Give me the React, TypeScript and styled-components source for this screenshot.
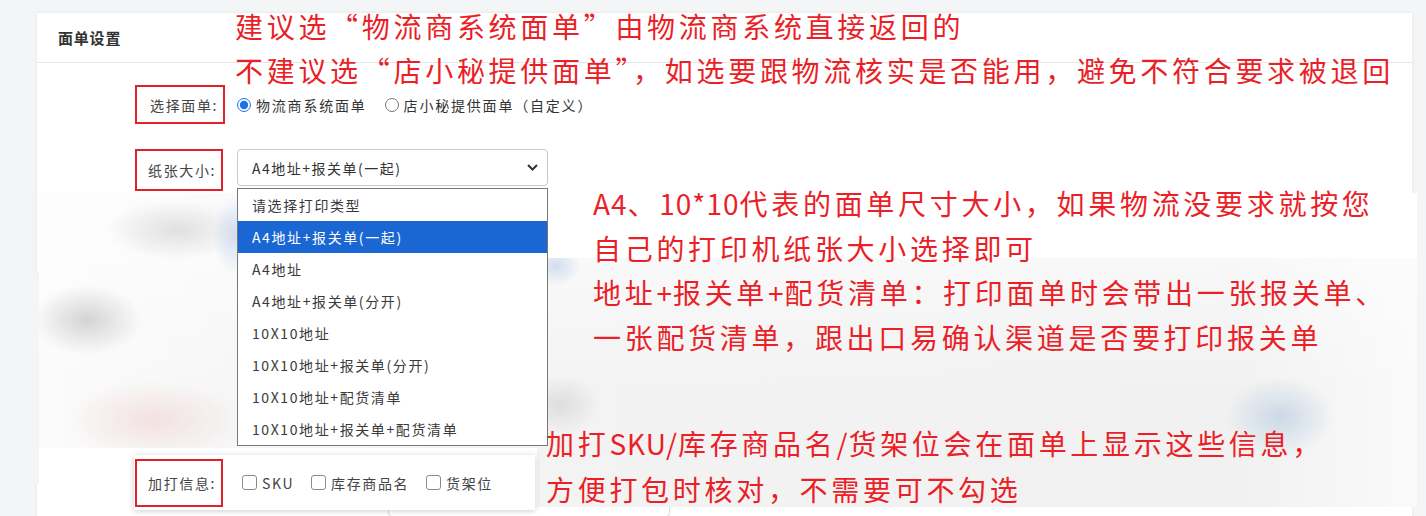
import React from "react";
import styled, {createGlobalStyle} from "styled-components";


const GlobalStyle = createGlobalStyle`
    html, body {
        margin: 0;
        padding: 0;
        background: #f4f5f6;
    }
    body {
        font-family: "Noto Sans CJK SC", "Noto Sans", sans-serif;
    }
`;

const Page = styled.div`
    position: relative;
    width: 1426px;
    height: 516px;
    overflow: hidden;
    padding-top: 13px;
    box-sizing: border-box;
`;

const Card = styled.section<{$height: number; $gap?: number}>`
    margin-left: 37px;
    margin-top: ${p => p.$gap || 0}px;
    width: 1375px;
    height: ${p => p.$height}px;
    background: #fff;
    box-shadow: 0 0 3px rgba(0, 0, 0, .08);
`;

const CardHeader = styled.header`
    height: 49px;
    padding-left: 21px;
    display: flex;
    align-items: center;
    border-bottom: 1px solid #e6e8ea;
    font-size: 15px;
    font-weight: 700;
    color: #333;
    letter-spacing: 0.8px;
`;

const Form = styled.div`
    padding: 22px 0 0 98px;
    display: flex;
    flex-direction: column;
    gap: 25px;
`;

const Row = styled.div<{$align?: string}>`
    display: grid;
    grid-template-columns: 90px auto;
    column-gap: 12px;
    align-items: ${p => p.$align || "center"};
`;

const Label = styled.label<{$h: number; $w?: number}>`
    box-sizing: border-box;
    width: ${p => p.$w || 90}px;
    height: ${p => p.$h}px;
    border: 2px solid #e3212b;
    display: flex;
    align-items: center;
    justify-content: flex-end;
    padding-right: 5px;
    font-size: 14px;
    color: #444;
    letter-spacing: 1.6px;
`;

const RadioGroup = styled.div`
    display: flex;
    align-items: center;
`;

const RadioOption = styled.label`
    display: flex;
    align-items: center;
    gap: 5px;
    margin-right: 18px;
    font-size: 14px;
    color: #333;
    letter-spacing: 1.8px;

    input {
        margin: 0;
        width: 14px;
        height: 14px;
        accent-color: #1a73e8;
    }
`;

const SelectWrap = styled.div`
    position: relative;
    width: 311px;
`;

const SelectBox = styled.div`
    box-sizing: border-box;
    height: 37px;
    border: 1px solid #c9c9c9;
    border-radius: 4px;
    display: flex;
    align-items: center;
    justify-content: space-between;
    padding: 0 9px 0 14px;
    font-size: 14px;
    color: #333;
    letter-spacing: 1.5px;
`;

const OptionList = styled.ul`
    position: absolute;
    top: 39px;
    left: 0;
    z-index: 3;
    box-sizing: border-box;
    width: 311px;
    margin: 0;
    padding: 0;
    list-style: none;
    border: 1px solid #777;
    background: #fff;
`;

const OptionItem = styled.li<{$active?: boolean}>`
    height: 32px;
    display: flex;
    align-items: center;
    padding-left: 14px;
    font-size: 14px;
    letter-spacing: 1.6px;
    color: ${p => p.$active ? "#fff" : "#3a3a3a"};
    background: ${p => p.$active ? "#1a67d3" : "transparent"};
`;

const GhostInput = styled.div`
    margin: 211px 0 0 351px;
    width: 280px;
    height: 32px;
    border: 1px solid #dadada;
    border-radius: 4px;
`;

// blurred part of the pasted screenshot
const BlurLayer = styled.div`
    position: absolute;
    left: 39px;
    top: 193px;
    z-index: 1;
    width: 1378px;
    height: 314px;
    background:
        linear-gradient(#fff, #fff) 509px 0 / 869px 65px no-repeat,
        linear-gradient(#fff, #fff) 0 255px / 498px 59px no-repeat,
        radial-gradient(70px 30px at 138px 37px, rgba(190, 190, 190, .45), transparent),
        radial-gradient(22px 40px at 196px 42px, rgba(160, 190, 235, .45), transparent),
        radial-gradient(55px 35px at 48px 127px, rgba(180, 180, 180, .55), transparent),
        radial-gradient(90px 40px at 114px 227px, rgba(235, 190, 190, .4), transparent),
        radial-gradient(25px 20px at 517px 73px, rgba(170, 195, 230, .5), transparent),
        radial-gradient(40px 30px at 521px 212px, rgba(195, 195, 195, .45), transparent),
        radial-gradient(55px 40px at 1241px 224px, rgba(170, 195, 220, .55), transparent),
        linear-gradient(180deg, rgba(255, 255, 255, .5) 65px, rgba(255, 255, 255, 0) 200px),
        linear-gradient(90deg, #fbfbfb 0, #f6f6f6 200px, #f3f3f3 520px, #f1f1f1 1200px, #f6f6f6 1300px, #fafafa 1378px);
`;

const Note = styled.div<{$left: number; $top: number; $lh: number}>`
    position: absolute;
    left: ${p => p.$left}px;
    top: ${p => p.$top}px;
    z-index: 4;
    font-size: 28px;
    line-height: ${p => p.$lh}px;
    letter-spacing: 3.7px;
    color: #ea1f27;
    white-space: nowrap;
`;

// latin bits in the notes run narrower than the CJK glyphs
const Latin = styled.span`
    letter-spacing: 1px;
`;

const ExtraPanel = styled.div`
    position: absolute;
    left: 134px;
    top: 455px;
    z-index: 3;
    width: 401px;
    height: 55px;
    padding-left: 1px;
    box-sizing: border-box;
    background: #fff;
    box-shadow: 0 1px 6px rgba(0, 0, 0, .2);
    display: flex;
    align-items: center;
`;

const CheckGroup = styled.div`
    display: flex;
    align-items: center;
    margin-left: 19px;
`;

const CheckOption = styled.label`
    display: flex;
    align-items: center;
    gap: 5px;
    margin-right: 17px;
    font-size: 14px;
    color: #444;
    letter-spacing: 1.6px;
`;

const CheckBox = styled.span`
    box-sizing: border-box;
    width: 15px;
    height: 15px;
    border: 1.5px solid #8a8a8a;
    border-radius: 3px;
    background: #fff;
`;


const PAPER_OPTIONS = [
    "请选择打印类型",
    "A4地址+报关单(一起)",
    "A4地址",
    "A4地址+报关单(分开)",
    "10X10地址",
    "10X10地址+报关单(分开)",
    "10X10地址+配货清单",
    "10X10地址+报关单+配货清单",
];

const EXTRA_INFO = ["SKU", "库存商品名", "货架位"];


function Chevron() {
    return (
        <svg width="11" height="7" viewBox="0 0 11 7">
            <path d="M1 1l4.5 4.5L10 1" stroke="#333" strokeWidth="2" fill="none"/>
        </svg>
    );
}


export default function App() {
    const renderOptions = PAPER_OPTIONS.map((item, index) => (
        <OptionItem key={index} $active={index === 1}>{item}</OptionItem>
    ));

    const renderChecks = EXTRA_INFO.map((item, index) => (
        <CheckOption key={index}>
            <CheckBox/>
            {item}
        </CheckOption>
    ));

    return (
        <Page>
            <GlobalStyle/>
            <Card $height={259}>
                <CardHeader>面单设置</CardHeader>
                <Form>
                    <Row>
                        <Label $h={39}>选择面单:</Label>
                        <RadioGroup>
                            <RadioOption>
                                <input type="radio" name="waybill" defaultChecked/>
                                物流商系统面单
                            </RadioOption>
                            <RadioOption>
                                <input type="radio" name="waybill"/>
                                店小秘提供面单（自定义）
                            </RadioOption>
                        </RadioGroup>
                    </Row>
                    <Row $align="start">
                        <Label $h={42} $w={88}>纸张大小:</Label>
                        <SelectWrap>
                            <SelectBox>
                                <span>A4地址+报关单(一起)</span>
                                <Chevron/>
                            </SelectBox>
                            <OptionList>{renderOptions}</OptionList>
                        </SelectWrap>
                    </Row>
                </Form>
            </Card>
            <Card $height={300} $gap={25}>
                <GhostInput/>
            </Card>

            <BlurLayer/>

            <ExtraPanel>
                <Label $h={48} $w={88}>加打信息:</Label>
                <CheckGroup>{renderChecks}</CheckGroup>
            </ExtraPanel>

            <Note $left={235} $top={4} $lh={44}>
                建议选“物流商系统面单”由物流商系统直接返回的<br/>
                不建议选“店小秘提供面单”，如选要跟物流核实是否能用，避免不符合要求被退回
            </Note>
            <Note $left={593} $top={181} $lh={44.5}>
                <Latin>A4</Latin>、<Latin>10*10</Latin>代表的面单尺寸大小，如果物流没要求就按您<br/>
                自己的打印机纸张大小选择即可<br/>
                地址<Latin>+</Latin>报关单<Latin>+</Latin>配货清单：打印面单时会带出一张报关单、<br/>
                一张配货清单，跟出口易确认渠道是否要打印报关单
            </Note>
            <Note $left={546} $top={420} $lh={46}>
                加打<Latin>SKU/</Latin>库存商品名<Latin>/</Latin>货架位会在面单上显示这些信息，<br/>
                方便打包时核对，不需要可不勾选
            </Note>
        </Page>
    );
}
